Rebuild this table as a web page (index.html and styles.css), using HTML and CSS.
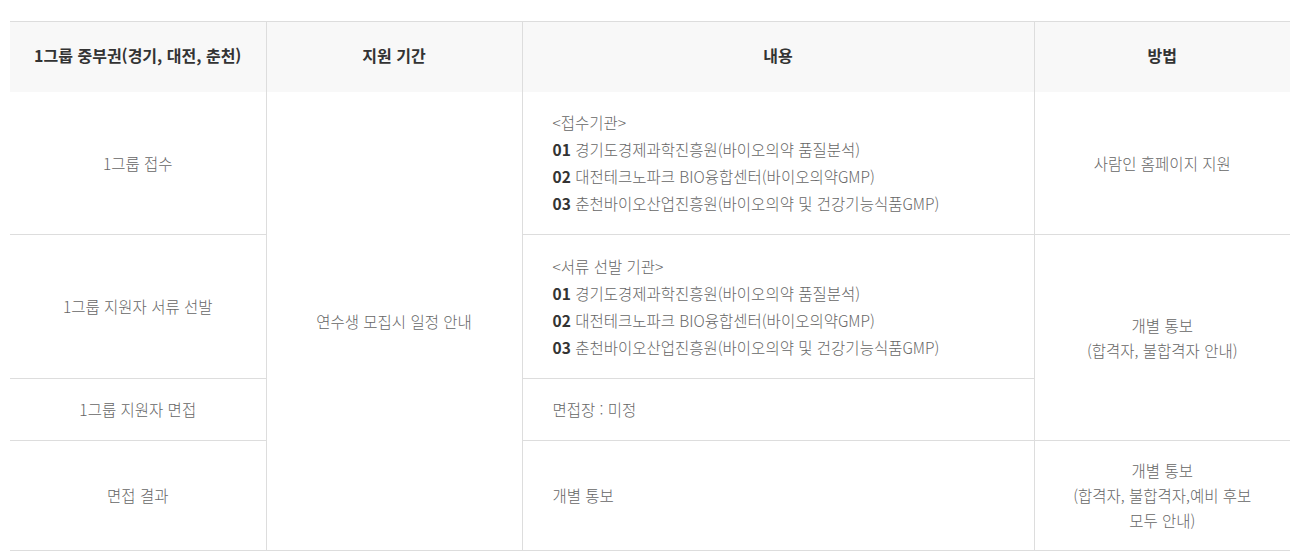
FILE: index.html
```html
<!DOCTYPE html>
<html lang="ko">
<head>
<meta charset="utf-8">
<link rel="stylesheet" href="styles.css">
</head>
<body>
<div class="wrap">
<table class="tbl">
  <colgroup>
    <col class="c1"><col class="c2"><col class="c3"><col class="c4">
  </colgroup>
  <thead>
    <tr>
      <th>1그룹 중부권(경기, 대전, 춘천)</th>
      <th>지원 기간</th>
      <th>내용</th>
      <th>방법</th>
    </tr>
  </thead>
  <tbody>
    <tr class="r1">
      <td>1그룹 접수</td>
      <td rowspan="4">연수생 모집시 일정 안내</td>
      <td class="left">&lt;접수기관&gt;<br><b>01</b> 경기도경제과학진흥원(바이오의약 품질분석)<br><b>02</b> 대전테크노파크 BIO융합센터(바이오의약GMP)<br><b>03</b> 춘천바이오산업진흥원(바이오의약 및 건강기능식품GMP)</td>
      <td class="method">사람인 홈페이지 지원</td>
    </tr>
    <tr class="r2">
      <td>1그룹 지원자 서류 선발</td>
      <td class="left">&lt;서류 선발 기관&gt;<br><b>01</b> 경기도경제과학진흥원(바이오의약 품질분석)<br><b>02</b> 대전테크노파크 BIO융합센터(바이오의약GMP)<br><b>03</b> 춘천바이오산업진흥원(바이오의약 및 건강기능식품GMP)</td>
      <td class="method" rowspan="2">개별 통보<br>(합격자, 불합격자 안내)</td>
    </tr>
    <tr class="r3">
      <td>1그룹 지원자 면접</td>
      <td class="left">면접장 : 미정</td>
    </tr>
    <tr class="r4">
      <td>면접 결과</td>
      <td class="left">개별 통보</td>
      <td class="method">개별 통보<br>(합격자, 불합격자,예비 후보<br>모두 안내)</td>
    </tr>
  </tbody>
</table>
</div>
</body>
</html>
```
FILE: styles.css
```css
html, body {
  margin: 0;
  padding: 0;
  background: #fff;
}
body {
  font-family: "Noto Sans CJK KR", "Noto Sans", sans-serif;
}
.wrap {
  padding: 21px 23px 0 10px;
}
.tbl {
  width: 1280px;
  border-collapse: collapse;
  table-layout: fixed;
  border-top: 1px solid #dddddd;
}
.c1, .c2, .c4 { width: 256px; }
.c3 { width: 512px; }
.tbl th {
  height: 66px;
  padding: 0 0 4px;
  background: #f8f8f8;
  color: #333;
  font-size: 16px;
  font-weight: 700;
  text-align: center;
  vertical-align: middle;
  border-left: 1px solid #dddddd;
}
.tbl th:first-child { border-left: none; }
.tbl td {
  padding: 16px 20px;
  font-size: 15.5px;
  line-height: 27px;
  font-weight: 300;
  color: #666;
  text-align: center;
  vertical-align: middle;
  border-left: 1px solid #dddddd;
  border-bottom: 1px solid #dddddd;
}
.tbl tr > td:first-child { border-left: none; }
.tbl td.left {
  text-align: left;
  padding-left: 30px;
}
.tbl td b {
  font-weight: 700;
  color: #333;
}
.tbl td.method {
  line-height: 25px;
  padding: 16px 10px;
}
.r1 td { height: 110px; }
.r2 td { height: 111px; }
.r3 td { height: 29px; }
.r4 td { height: 77px; }
```
